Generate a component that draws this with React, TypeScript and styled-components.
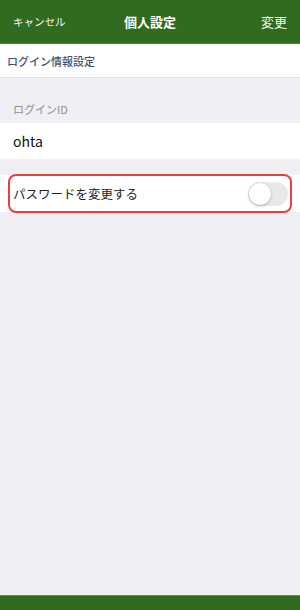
import styled, { createGlobalStyle } from 'styled-components'

const GlobalStyle = createGlobalStyle`
  html, body {
    margin: 0;
    padding: 0;
    height: 100%;
  }
  body {
    font-family: 'Noto Sans CJK JP', 'Noto Sans', sans-serif;
    background: #efeff4;
  }
  #root {
    height: 100%;
  }
`

const Screen = styled.div`
  display: flex;
  flex-direction: column;
  width: 300px;
  height: 610px;
  background: #efeff4;
`

const NavBar = styled.header`
  display: grid;
  grid-template-columns: 1fr auto 1fr;
  align-items: center;
  height: 43px;
  padding: 0 13px;
  background: #306b1f;
  color: #fff;
  border-bottom: 1px solid #4d7f3f;
`

const NavButton = styled.span<{ $align: 'left' | 'right' }>`
  font-size: ${(p) => (p.$align === 'left' ? '10.5px' : '13px')};
  text-align: ${(p) => p.$align};
  color: #f2f5f0;
`

const NavTitle = styled.h1`
  margin: 0;
  font-size: 13px;
  font-weight: 700;
`

const SectionHeader = styled.div`
  display: flex;
  align-items: center;
  height: 33px;
  padding: 0 7px;
  background: #fff;
  border-bottom: 1px solid #dcdce6;
  font-size: 11px;
  font-weight: 500;
  color: #46536a;
`

const Content = styled.main`
  flex: 1;
  padding-top: 23px;
`

const GroupLabel = styled.div`
  padding: 0 13px;
  height: 22px;
  font-size: 11px;
  color: #8e8e93;
`

const Row = styled.div`
  display: flex;
  align-items: center;
  justify-content: space-between;
  height: 36px;
  padding: 0 13px;
  background: #fff;
  font-size: 14px;
  color: #111;
`

const Spacer = styled.div`
  height: 16px;
`

const Highlight = styled.div`
  position: relative;
`

const Outline = styled.div`
  position: absolute;
  left: 8px;
  right: 8px;
  top: -1px;
  bottom: -1px;
  border: 2px solid #e8413a;
  border-radius: 8px;
  pointer-events: none;
`

const ToggleRow = styled(Row)`
  height: 37px;
  font-size: 12.5px;
  color: #222;
`

const Switch = styled.span<{ $on: boolean }>`
  position: relative;
  display: inline-block;
  width: 40px;
  height: 24px;
  margin-right: -1px;
  border-radius: 12px;
  background: ${(p) => (p.$on ? '#4cd964' : '#e9e9ea')};

  &::after {
    content: '';
    position: absolute;
    top: 1px;
    left: ${(p) => (p.$on ? '17px' : '1px')};
    width: 22px;
    height: 22px;
    border-radius: 50%;
    background: #fff;
    box-shadow: 0 1px 3px rgba(0, 0, 0, 0.25), 0 0 1px rgba(0, 0, 0, 0.15);
  }
`

const Footer = styled.footer`
  height: 14px;
  background: #306b1f;
  border-top: 1px solid #5e8c52;
`

export default function App() {
  return (
    <>
      <GlobalStyle />
      <Screen>
        <NavBar>
          <NavButton $align="left">キャンセル</NavButton>
          <NavTitle>個人設定</NavTitle>
          <NavButton $align="right">変更</NavButton>
        </NavBar>
        <SectionHeader>ログイン情報設定</SectionHeader>
        <Content>
          <GroupLabel>ログインID</GroupLabel>
          <Row>ohta</Row>
          <Spacer />
          <Highlight>
            <ToggleRow>
              パスワードを変更する
              <Switch $on={false} />
            </ToggleRow>
            <Outline />
          </Highlight>
        </Content>
        <Footer />
      </Screen>
    </>
  )
}
